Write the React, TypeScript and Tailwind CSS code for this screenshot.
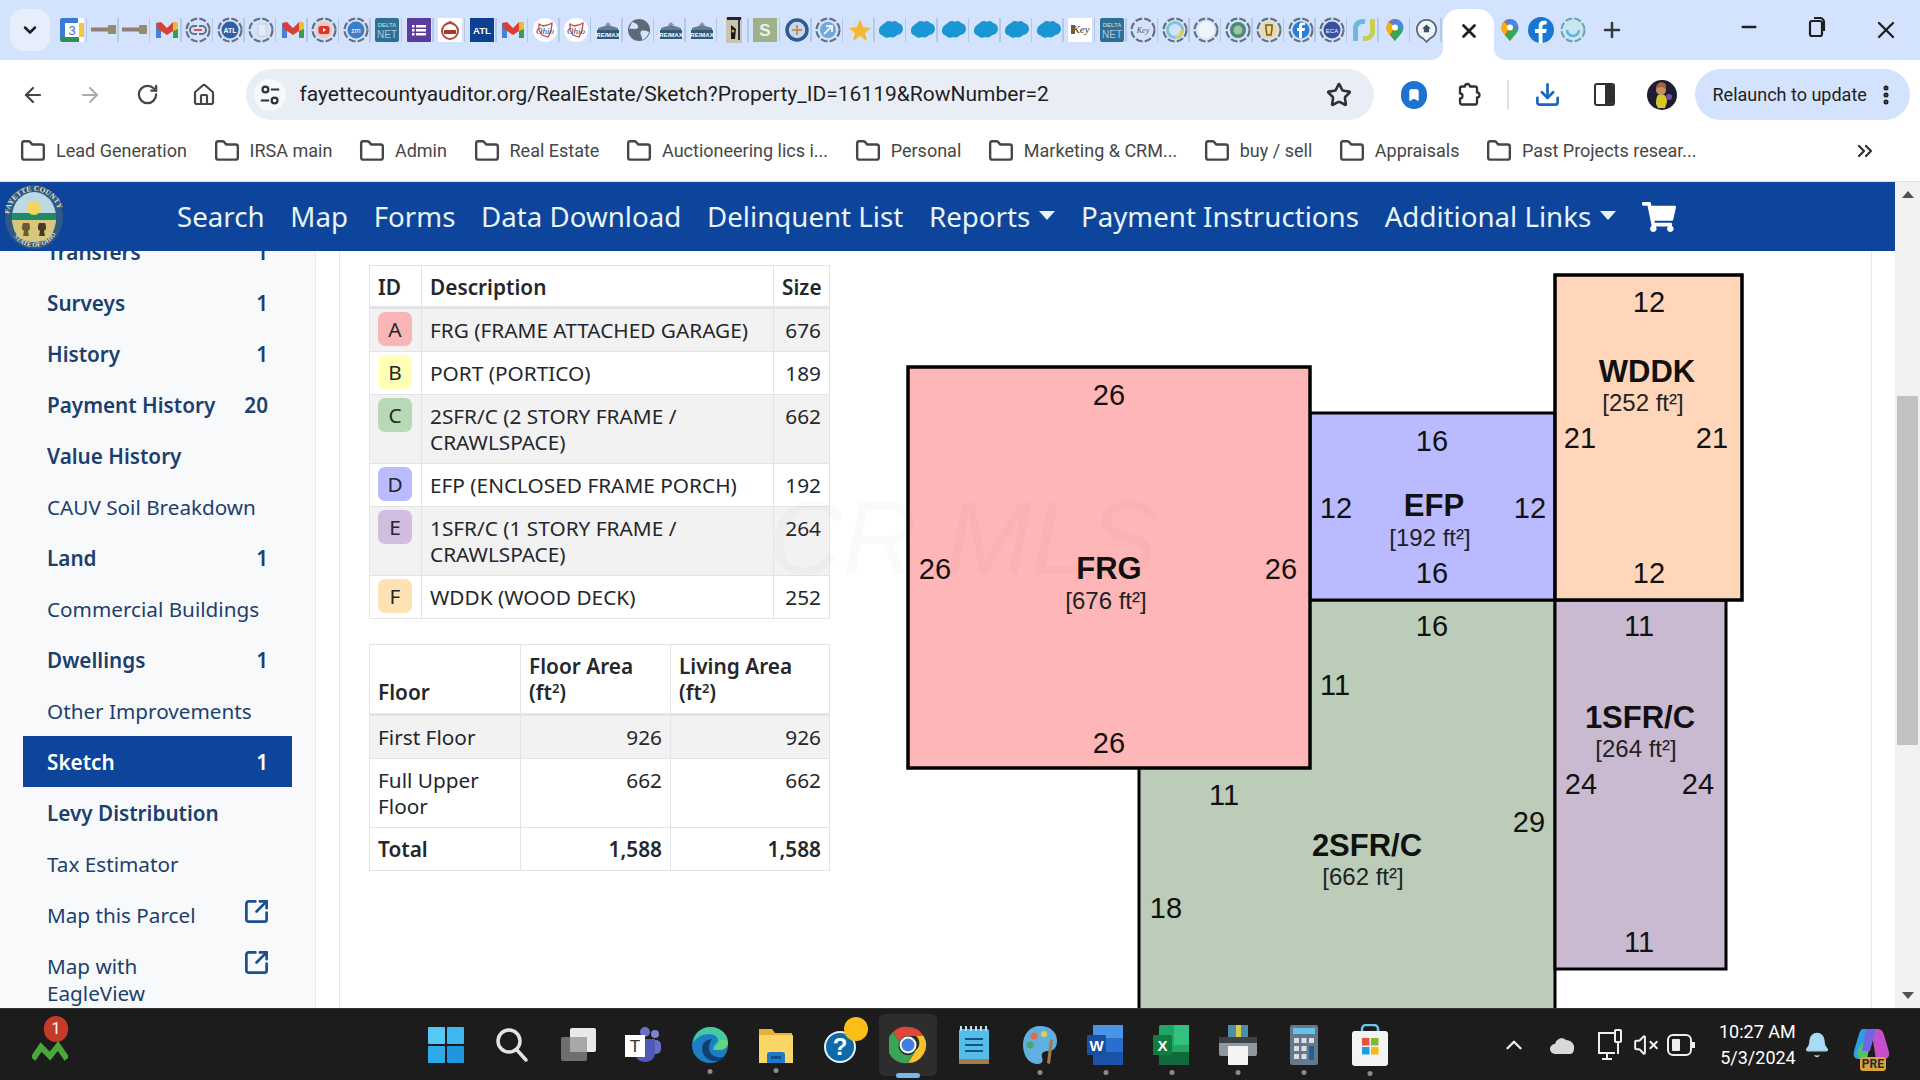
import { ReactNode } from "react";
import {
  ArrowLeft,
  ArrowRight,
  RotateCw,
  Home,
  Star,
  Download,
  EllipsisVertical,
  Plus,
  X,
  Minus,
  ChevronDown,
  ChevronUp,
  ChevronsRight,
  Folder,
  Bookmark,
  SquareArrowOutUpRight,
  Bell,
  VolumeX,
} from "lucide-react";
import { FaShoppingCart } from "react-icons/fa";

const ui = "font-['Noto_Sans',sans-serif]";
const chrome = "font-['Roboto',sans-serif]";

function Ring({ children }: { children?: ReactNode }) {
  return (
    <svg width="26" height="26" viewBox="0 0 26 26">
      <circle cx="13" cy="13" r="11.5" fill="none" stroke="#66717f" strokeWidth="2.2" strokeDasharray="7 2.2" />
      {children}
    </svg>
  );
}

function Gmail() {
  return (
    <svg width="24" height="24" viewBox="0 0 24 24">
      <path d="M1 5v15h5V10z" fill="#4a80d8" />
      <path d="M23 5v15h-5V10z" fill="#3c9a57" />
      <path d="M1 5l5-1 6 6 6-6 5 1-2 6-9 6-9-6z" fill="#d93f34" />
      <path d="M18 4l5 1v6l-5 2z" fill="#f2bc2e" />
    </svg>
  );
}

function Maps({ size = 24 }: { size?: number }) {
  return (
    <svg width={size} height={size} viewBox="0 0 24 24">
      <path d="M12 1a8.5 8.5 0 0 0-8.5 8.5c0 3 1.5 5 3.5 7.5l5 6z" fill="#e0483c" />
      <path d="M12 1a8.5 8.5 0 0 1 8.5 8.5c0 1.5-.4 2.7-1 4L6 4z" fill="#4a86e8" />
      <path d="M19.5 13.5c-1.5 3-5 6-7.5 9.500l-5-6 9-9z" fill="#34a853" />
      <path d="M3.5 9.5c0-1.500.8-4 2.500-5.500l6 5-5 8c-2-2.500-3.500-4.500-3.500-7.500z" fill="#f4b400" />
      <circle cx="12" cy="9.5" r="3" fill="#ffffff" />
    </svg>
  );
}

function House() {
  return (
    <svg width="26" height="24" viewBox="0 0 26 24">
      <path d="M13 4l3 3-3 1-3-1z" fill="#8d98a6" />
      <path d="M3 10l10-3 10 3v2H3z" fill="#6c7b8b" />
      <rect x="2" y="12" width="22" height="9" fill="#2f5a7e" />
      <text x="13" y="19" textAnchor="middle" fontSize="6" fill="#ffffff" fontFamily="Liberation Sans" fontWeight="700">RE/MAX</text>
    </svg>
  );
}

function Cloud() {
  return (
    <svg width="26" height="20" viewBox="0 0 26 20">
      <path d="M7 3c2-2.500 5-2.500 7-1 2-2 5-1 6 1 3 .5 5 3 5 6s-3 6-6 6c-2 2.500-5 3-7 2-3 1.500-6 .5-7-1.500C2 15 .5 12.500 1 10c.2-3 3-5.500 6-7z" fill="#1b96d4" />
    </svg>
  );
}

function Ohio() {
  return (
    <svg width="24" height="24" viewBox="0 0 24 24">
      <circle cx="12" cy="12" r="12" fill="#ffffff" />
      <path d="M6 6l4 2 5-1 4-2-1 8-3 6-6-2-3-5z" fill="none" stroke="#c8454a" strokeWidth="1.3" />
      <text x="12" y="16" textAnchor="middle" fontSize="9" fontStyle="italic" fill="#1f3f7a" fontFamily="Liberation Serif">Ohio</text>
    </svg>
  );
}

const tabKinds = [
  "cal", "pin", "pin", "gmail", "link", "ratl", "blank", "gmail", "yt", "zm", "delta", "list", "rot", "atl", "gmail",
  "ohio", "ohio", "house", "globe", "house", "house", "book", "s", "bluecirc", "ringz", "star",
  "cloud", "cloud", "cloud", "cloud", "cloud", "cloud", "key", "delta", "ringkey", "swirl", "blank2", "green", "yellow", "fb", "eca",
  "swoosh", "maps", "pinhome",
];

function Favicon({ kind }: { kind: string }) {
  switch (kind) {
    case "cal":
      return (
        <svg width="24" height="24" viewBox="0 0 24 24">
          <rect width="24" height="24" rx="2" fill="#fff" />
          <path d="M0 2a2 2 0 0 1 2-2h16v5H5v14H0z" fill="#3b78d8" />
          <path d="M19 5h5v14h-5z" fill="#f4c542" />
          <path d="M0 19h19v5H2a2 2 0 0 1-2-2z" fill="#2f8f56" />
          <text x="12" y="17" textAnchor="middle" fontSize="13" fill="#3d6fb4" fontFamily="Liberation Sans">3</text>
        </svg>
      );
    case "pin":
      return (
        <svg width="26" height="12" viewBox="0 0 26 12">
          <rect x="0" y="3.5" width="18" height="4" fill="#8f7f72" />
          <rect x="17" y="1" width="8" height="9" rx="1" fill="#9a8a6d" />
        </svg>
      );
    case "gmail":
      return <Gmail />;
    case "link":
      return (
        <Ring>
          <path d="M12 9H9a4 4 0 0 0 0 8h3M14 9h3a4 4 0 0 1 0 8h-3" fill="none" stroke="#66717f" strokeWidth="2" />
          <rect x="9" y="12" width="8" height="2" fill="#d9534f" />
        </Ring>
      );
    case "ratl":
      return (
        <Ring>
          <circle cx="13" cy="13" r="8.5" fill="#2f5fa7" />
          <text x="13" y="15.5" textAnchor="middle" fontSize="7" fontWeight="700" fill="#fff" fontFamily="Liberation Sans">ATL</text>
        </Ring>
      );
    case "blank":
      return (
        <Ring>
          <rect x="10" y="7" width="8" height="12" fill="#e5ebf5" stroke="#c6ccd6" />
        </Ring>
      );
    case "yt":
      return (
        <Ring>
          <circle cx="13" cy="13" r="8.5" fill="#f2c6c2" />
          <rect x="7.5" y="9" width="11" height="8" rx="2" fill="#e0352b" />
          <path d="M12 11l3 2-3 2z" fill="#fff" />
        </Ring>
      );
    case "zm":
      return (
        <Ring>
          <circle cx="13" cy="13" r="8.5" fill="#3c7ec9" />
          <text x="13" y="15.5" textAnchor="middle" fontSize="7" fill="#fff" fontFamily="Liberation Sans">zm</text>
        </Ring>
      );
    case "delta":
      return (
        <svg width="24" height="24" viewBox="0 0 24 24">
          <rect width="24" height="24" rx="2" fill="#2e6f96" />
          <text x="12" y="9" textAnchor="middle" fontSize="6" fill="#cfe1ec" fontFamily="Liberation Sans">DELTA</text>
          <text x="12" y="20" textAnchor="middle" fontSize="10" fill="#a9cbdf" fontFamily="Liberation Sans">NET</text>
        </svg>
      );
    case "list":
      return (
        <svg width="24" height="24" viewBox="0 0 24 24">
          <rect width="24" height="24" rx="1" fill="#5b3b9d" />
          <path d="M9 7h10v2.500H9zM9 11h10v2.500H9zM9 15h10v2.500H9zM5 7h2.500v2.500H5zM5 11h2.500v2.500H5zM5 15h2.500v2.500H5z" fill="#fff" />
        </svg>
      );
    case "rot":
      return (
        <svg width="24" height="24" viewBox="0 0 24 24">
          <rect width="24" height="24" fill="#fff" />
          <circle cx="12" cy="13" r="8" fill="none" stroke="#b34a3a" strokeWidth="2" />
          <rect x="6" y="12" width="12" height="4" fill="#a8392b" />
          <path d="M7 7l5-3 5 3" fill="none" stroke="#b34a3a" strokeWidth="2" />
        </svg>
      );
    case "atl":
      return (
        <svg width="24" height="24" viewBox="0 0 24 24">
          <rect width="24" height="24" fill="#0d3f93" />
          <text x="12" y="16" textAnchor="middle" fontSize="9.5" fontWeight="700" fill="#fff" fontFamily="Liberation Sans">ATL</text>
        </svg>
      );
    case "ohio":
      return <Ohio />;
    case "house":
      return <House />;
    case "globe":
      return (
        <svg width="24" height="24" viewBox="0 0 24 24">
          <circle cx="12" cy="12" r="11" fill="#5d6a7a" />
          <path d="M5 4c4 1 7 3 6 6-3 2-6 0-9 1zM14 13c3-1 6 0 8 1-1 4-4 7-7 8 1-3-3-6-1-9z" fill="#d3e3fd" />
        </svg>
      );
    case "book":
      return (
        <svg width="16" height="26" viewBox="0 0 16 26">
          <rect width="16" height="26" fill="#c9c4b2" />
          <rect x="1" y="0" width="14" height="3" fill="#23262c" />
          <path d="M5 8l5 4-1 10H5z" fill="#17181c" />
          <rect x="12" y="3" width="2" height="20" fill="#2f3640" />
          <circle cx="7" cy="14" r="1.5" fill="#e3a529" />
        </svg>
      );
    case "s":
      return (
        <svg width="24" height="24" viewBox="0 0 24 24">
          <rect width="24" height="24" fill="#9db28a" />
          <text x="12" y="18" textAnchor="middle" fontSize="17" fontWeight="700" fill="#f0f3e7" fontFamily="Liberation Sans">S</text>
        </svg>
      );
    case "bluecirc":
      return (
        <svg width="24" height="24" viewBox="0 0 24 24">
          <circle cx="12" cy="12" r="10" fill="#c9d7e6" stroke="#2d5c92" strokeWidth="3.5" />
          <path d="M12 7v10M7 12h10" stroke="#b7956b" strokeWidth="2" />
        </svg>
      );
    case "ringz":
      return (
        <Ring>
          <circle cx="13" cy="13" r="8" fill="#6ea8d8" />
          <path d="M9 17l8-8M11 9h6v6" fill="none" stroke="#e6f0fb" strokeWidth="2" />
        </Ring>
      );
    case "star":
      return (
        <svg width="24" height="24" viewBox="0 0 24 24">
          <path d="M12 1l3 8 8 1-6 5 2 8-7-5-7 5 2-8-6-5 8-1z" fill="#f5b82e" />
        </svg>
      );
    case "cloud":
      return <Cloud />;
    case "key":
      return (
        <svg width="24" height="24" viewBox="0 0 24 24">
          <rect width="24" height="24" fill="#fff" />
          <text x="13" y="15" textAnchor="middle" fontSize="11" fontStyle="italic" fill="#333" fontFamily="Liberation Serif">Key</text>
          <rect x="3" y="7" width="4" height="9" fill="#7a5a35" />
        </svg>
      );
    case "ringkey":
      return (
        <Ring>
          <text x="13" y="16" textAnchor="middle" fontSize="8" fontStyle="italic" fill="#555" fontFamily="Liberation Serif">Key</text>
        </Ring>
      );
    case "swirl":
      return (
        <Ring>
          <circle cx="13" cy="13" r="7.5" fill="none" stroke="#7fc4d8" strokeWidth="3" />
          <path d="M13 20a7 7 0 0 0 7-7" fill="none" stroke="#d7d44f" strokeWidth="3" />
        </Ring>
      );
    case "blank2":
      return (
        <Ring>
          <circle cx="13" cy="13" r="8.5" fill="#f1f5fb" />
        </Ring>
      );
    case "green":
      return (
        <Ring>
          <circle cx="13" cy="13" r="8" fill="#4a8a72" />
          <circle cx="13" cy="13" r="4.5" fill="#9cc4ad" />
        </Ring>
      );
    case "yellow":
      return (
        <Ring>
          <circle cx="13" cy="13" r="8.5" fill="#eedb8f" />
          <path d="M10 8h6v4l-1 6h-4l-1-6z" fill="none" stroke="#655a44" strokeWidth="1.5" />
        </Ring>
      );
    case "fb":
      return (
        <Ring>
          <circle cx="13" cy="13" r="8.5" fill="#2d7dd2" />
          <path d="M14 21v-7h2.500l.5-3h-3V9.500c0-1 .5-1.500 1.500-1.500H17V5.500h-2.500c-2.500 0-3.500 1.500-3.500 3.500v2H9v3h2v7z" fill="#fff" />
        </Ring>
      );
    case "eca":
      return (
        <Ring>
          <circle cx="13" cy="13" r="8.5" fill="#3a4f9e" />
          <text x="13" y="16" textAnchor="middle" fontSize="6" fill="#fff" fontFamily="Liberation Sans">ECA</text>
        </Ring>
      );
    case "swoosh":
      return (
        <svg width="26" height="26" viewBox="0 0 26 26">
          <path d="M2 24V12C2 6 6 2 12 2h2v5h-2c-3 0-5 2-5 5v12z" fill="#6fb7dc" />
          <path d="M24 2v12c0 6-4 10-10 10h-2v-5h2c3 0 5-2 5-5V2z" fill="#c8cf4f" />
        </svg>
      );
    case "maps":
      return <Maps />;
    case "pinhome":
      return (
        <svg width="21" height="25" viewBox="0 0 24 28">
          <path d="M12 27l-4-4a11 11 0 1 1 8 0z" fill="#f1f5fb" stroke="#5b6876" strokeWidth="2" />
          <path d="M12 7l5 5h-2v4H9v-4H7z" fill="#3f5165" />
        </svg>
      );
    default:
      return null;
  }
}

function Tab({ kind }: { kind: string }) {
  return (
    <div className="flex w-[31.5px] shrink-0 items-center justify-center">
      <div className="flex w-[27px] justify-center">
        <Favicon kind={kind} />
      </div>
      <div className="h-[24px] w-[1.5px] shrink-0 bg-[#b4c9e8]" />
    </div>
  );
}

function TabStrip() {
  return (
    <div className="flex h-[60px] items-center bg-[#d3e3fd] text-[#1f1f1f]">
      <div className="ml-[10px] mr-[7px] flex h-[42px] w-[40px] items-center justify-center rounded-[14px] bg-[#e6eefb]">
        <ChevronDown size={20} strokeWidth={3} />
      </div>
      {tabKinds.map((k, i) => (
        <Tab key={i} kind={k} />
      ))}
      <div className="relative mt-[9px] flex h-[51px] w-[51px] shrink-0 items-center justify-center rounded-t-[16px] bg-white">
        <X size={22} strokeWidth={3} className="mb-[8px]" />
        <svg className="absolute bottom-0 left-[-12px]" width="12" height="12" viewBox="0 0 12 12">
          <path d="M12 0v12H0a12 12 0 0 0 12-12z" fill="#ffffff" />
        </svg>
        <svg className="absolute bottom-0 right-[-12px]" width="12" height="12" viewBox="0 0 12 12">
          <path d="M0 0v12h12A12 12 0 0 1 0 0z" fill="#ffffff" />
        </svg>
      </div>
      <div className="flex w-[31.5px] shrink-0 items-center justify-center"><Maps /></div>
      <div className="flex w-[31.5px] shrink-0 items-center justify-center">
        <svg width="26" height="26" viewBox="0 0 26 26">
          <circle cx="13" cy="13" r="13" fill="#1877d2" />
          <path d="M14.5 26v-10h3.500l.6-4h-4.100V9.500c0-1.200.6-2 2-2h2.200V4c-1-.1-2-.3-3-.3-3.200 0-5 2-5 5V12H7v4h3.700v10z" fill="#fff" />
        </svg>
      </div>
      <div className="flex w-[31.5px] shrink-0 items-center justify-center">
        <svg width="26" height="26" viewBox="0 0 26 26">
          <circle cx="13" cy="13" r="11.5" fill="#cbe6f1" stroke="#66a0b8" strokeWidth="2" strokeDasharray="7 2.2" />
          <path d="M7 13a6 6 0 0 0 12 0" fill="none" stroke="#5db6dd" strokeWidth="2.5" />
        </svg>
      </div>
      <div className="flex w-[47px] shrink-0 items-center justify-center">
        <Plus size={24} strokeWidth={2.5} className="text-[#33383f]" />
      </div>
      <div className="ml-auto flex">
        <div className="flex w-[66px] justify-center"><Minus size={22} strokeWidth={2.5} /></div>
        <div className="flex w-[70px] justify-center">
          <svg width="20" height="22" viewBox="0 0 20 22" fill="none" stroke="#1f1f1f" strokeWidth="2.2">
            <rect x="3" y="5" width="12" height="15" rx="2" />
            <path d="M7 2h6a4 4 0 0 1 4 4v9" />
          </svg>
        </div>
        <div className="flex w-[68px] justify-center"><X size={28} strokeWidth={2} /></div>
      </div>
    </div>
  );
}

function Toolbar() {
  return (
    <div className={`${chrome} flex h-[60px] items-center rounded-t-[12px] bg-white pt-[9px] text-[#454746]`}>
      <div className="ml-[4.5px] flex w-[57px] justify-center"><ArrowLeft size={24} strokeWidth={2.2} /></div>
      <div className="flex w-[57px] justify-center"><ArrowRight size={24} strokeWidth={2} className="text-[#a9abad]" /></div>
      <div className="flex w-[57px] justify-center"><RotateCw size={23} strokeWidth={2.4} /></div>
      <div className="flex w-[57px] justify-center"><Home size={24} strokeWidth={2.2} /></div>
      <div className="ml-[13px] flex h-[51px] w-[1128px] items-center rounded-full bg-[#e9eef6]">
        <div className="ml-[8px] flex h-[32px] w-[32px] items-center justify-center rounded-full bg-[#f6f8fc]">
          <svg width="22" height="22" viewBox="0 0 24 24" fill="none" stroke="#303133" strokeWidth="2.4">
            <circle cx="7" cy="6" r="3.2" />
            <path d="M13 6h9M2 18h9" />
            <circle cx="17" cy="18" r="3.2" />
          </svg>
        </div>
        <span className="ml-[14px] text-[21px] text-[#1f1f1f]">fayettecountyauditor.org/RealEstate/Sketch?Property_ID=16119&amp;RowNumber=2</span>
        <Star size={26} strokeWidth={2.4} className="ml-auto mr-[22px] text-[#303133]" />
      </div>
      <div className="ml-[13px] flex w-[55px] justify-center">
        <div className="flex h-[28px] w-[26px] items-center justify-center rounded-full bg-[#1e73cf]">
          <Bookmark size={14} fill="#ffffff" strokeWidth={2} className="text-white" />
        </div>
      </div>
      <div className="flex w-[55px] justify-center">
        <svg width="24" height="27" viewBox="0 0 24 24" fill="none" stroke="#303133" strokeWidth="2.3" strokeLinejoin="round">
          <path d="M8 22H5a2 2 0 0 1-2-2v-4a2.500 2.500 0 0 0 0-5V6a2 2 0 0 1 2-2h3a2.500 2.500 0 0 1 5 0h5a2 2 0 0 1 2 2v4a2.500 2.500 0 0 1 0 5v5a2 2 0 0 1-2 2z" />
        </svg>
      </div>
      <div className="ml-[10px] h-[30px] w-[2px] bg-[#dfe3e8]" />
      <div className="ml-[11px] flex w-[56px] justify-center"><Download size={27} strokeWidth={2.4} className="text-[#1769bf]" /></div>
      <div className="flex w-[58px] justify-center">
        <div className="flex h-[23px] w-[21px] overflow-hidden rounded-[3px] border-[2.5px] border-[#2e3033]">
          <div className="w-1/2" />
          <div className="w-1/2 bg-[#2e3033]" />
        </div>
      </div>
      <div className="flex w-[56px] justify-center">
        <svg width="30" height="30" viewBox="0 0 30 30">
          <circle cx="15" cy="15" r="15" fill="#1c1d33" />
          <path d="M9 24c0-6 1-10 5-10s6 3 6 8l-2 6h-7z" fill="#d8c626" />
          <circle cx="14" cy="10" r="5" fill="#c98e5c" />
          <path d="M9 9c0-5 4-8 8-6 3 1 2 5 1 6-3-3-6-2-9 0z" fill="#a8623a" />
          <circle cx="22" cy="17" r="3" fill="#7a4fa3" />
        </svg>
      </div>
      <div className="ml-[5px] flex h-[51px] w-[215px] items-center rounded-full bg-[#d3e3fd] pl-[18px] text-[#1f1f1f]">
        <span className="text-[18px]">Relaunch to update</span>
        <EllipsisVertical size={24} strokeWidth={3} className="ml-auto mr-[12px]" />
      </div>
    </div>
  );
}

const bookmarks = [
  "Lead Generation",
  "IRSA main",
  "Admin",
  "Real Estate",
  "Auctioneering lics i...",
  "Personal",
  "Marketing & CRM...",
  "buy / sell",
  "Appraisals",
  "Past Projects resear...",
];

function Bookmarks() {
  return (
    <div className={`${chrome} flex h-[62px] items-center gap-[26.6px] border-b border-[#d3e3fd] bg-white pl-[20px] text-[#454746]`}>
      {bookmarks.map((b) => (
        <div key={b} className="flex items-center gap-[10px]">
          <Folder size={26} strokeWidth={2.2} className="text-[#454746]" />
          <span className="text-[18px]">{b}</span>
        </div>
      ))}
      <ChevronsRight size={24} strokeWidth={2.2} className="ml-auto mr-[43px] text-[#303133]" />
    </div>
  );
}

function Seal() {
  return (
    <svg width="58" height="66" viewBox="0 0 58 66" className="shrink-0">
      <defs>
        <path id="sealTop" d="M4 33a25 26 0 0 1 50 0" />
        <path id="sealBottom" d="M3 35a26 28 0 0 0 52 0" />
      </defs>
      <ellipse cx="29" cy="33" rx="29" ry="32" fill="#2f5a88" />
      <ellipse cx="29" cy="33" rx="22" ry="25" fill="#bcd9e4" />
      <path d="M7 29h44v7H7z" fill="#1f8a6a" />
      <circle cx="29" cy="24" r="7" fill="#f3d45e" />
      <path d="M7 36h44c-1 10-4 15-8 18-3 2-9 4-14 4s-11-2-14-4c-4-3-7-8-8-18z" fill="#d6c77c" />
      <path d="M18 39c-2 5-1 7 1 8l-1 5h6l-1-5c2-1 3-3 1-8z" fill="#6e5a32" />
      <path d="M34 39c-2 5-1 7 1 8l-1 5h6l-1-5c2-1 3-3 1-8z" fill="#453a22" />
      <text fontSize="7.5" fill="#e9e1b6" fontFamily="Liberation Serif" fontWeight="700">
        <textPath href="#sealTop" startOffset="4%">FAYETTE COUNTY</textPath>
      </text>
      <text fontSize="6.5" fill="#e9e1b6" fontFamily="Liberation Serif" fontWeight="700">
        <textPath href="#sealBottom" startOffset="22%">STATE OF OHIO</textPath>
      </text>
    </svg>
  );
}

function NavCaret({ label }: { label: string }) {
  return (
    <span className="flex items-center gap-[9px]">
      {label}
      <span className="mt-[-2px] h-0 w-0 border-x-[8.5px] border-t-[9px] border-x-transparent border-t-[#e8f4f8]" />
    </span>
  );
}

function TopNav() {
  return (
    <nav className={`${ui} flex h-[69px] shrink-0 items-center bg-[#0d459c] pl-[5px] text-[27.7px] text-[#e8f4f8]`}>
      <Seal />
      <div className="ml-[114px] flex items-center gap-[25.7px] pt-[1px]">
        <span>Search</span>
        <span>Map</span>
        <span>Forms</span>
        <span>Data Download</span>
        <span>Delinquent List</span>
        <NavCaret label="Reports" />
        <span>Payment Instructions</span>
        <NavCaret label="Additional Links" />
        <FaShoppingCart size={34} className="text-white" />
      </div>
    </nav>
  );
}

const sideItems: { label: string; count?: string; bold?: boolean; active?: boolean; ext?: boolean }[] = [
  { label: "Transfers", count: "1", bold: true },
  { label: "Surveys", count: "1", bold: true },
  { label: "History", count: "1", bold: true },
  { label: "Payment History", count: "20", bold: true },
  { label: "Value History", bold: true },
  { label: "CAUV Soil Breakdown" },
  { label: "Land", count: "1", bold: true },
  { label: "Commercial Buildings" },
  { label: "Dwellings", count: "1", bold: true },
  { label: "Other Improvements" },
  { label: "Sketch", count: "1", bold: true, active: true },
  { label: "Levy Distribution", bold: true },
  { label: "Tax Estimator" },
  { label: "Map this Parcel", ext: true },
  { label: "Map with EagleView", ext: true },
];

function Sidebar() {
  return (
    <aside className={`${ui} w-[316px] shrink-0 overflow-hidden border-r border-[#e6e8eb] bg-[#f8f9fa] pl-[23px] pr-[23px]`}>
      <div className="mt-[-25px]">
        {sideItems.map((it) => (
          <div
            key={it.label}
            className={`flex justify-between pb-[11px] pl-[24px] pr-[24px] pt-[13px] text-[20.7px] leading-[27px] ${
              it.active ? "bg-[#0d459c] text-white" : "text-[#1c3f6e]"
            } ${it.bold ? "font-semibold" : "font-normal"}`}
          >
            <span className={it.ext ? "w-[160px]" : ""}>{it.label}</span>
            {it.count && <span>{it.count}</span>}
            {it.ext && <SquareArrowOutUpRight size={27} strokeWidth={2.4} className="mt-[-4px] mr-[-2px] text-[#1c4f8e]" />}
          </div>
        ))}
      </div>
    </aside>
  );
}

const legend = [
  { id: "A", chip: "bg-[#f9b6b6]", desc: "FRG (FRAME ATTACHED GARAGE)", size: "676" },
  { id: "B", chip: "bg-[#ffffb8]", desc: "PORT (PORTICO)", size: "189" },
  { id: "C", chip: "bg-[#b9d9b6]", desc: "2SFR/C (2 STORY FRAME / CRAWLSPACE)", size: "662" },
  { id: "D", chip: "bg-[#babcff]", desc: "EFP (ENCLOSED FRAME PORCH)", size: "192" },
  { id: "E", chip: "bg-[#d2bce0]", desc: "1SFR/C (1 STORY FRAME / CRAWLSPACE)", size: "264" },
  { id: "F", chip: "bg-[#ffe2b4]", desc: "WDDK (WOOD DECK)", size: "252" },
];

const cellBase = "border border-[#e2e4e7] px-[8px] py-[8px]";
const cell = `${cellBase} align-top`;

function LegendTable() {
  return (
    <table className="w-[460px] table-fixed border-collapse font-['Noto_Sans',sans-serif] text-[20.8px] leading-[26px] text-[#24272b]">
      <colgroup>
        <col className="w-[52px]" />
        <col className="w-[352px]" />
        <col className="w-[56px]" />
      </colgroup>
      <thead>
        <tr>
          <th className={`${cell} border-b-[3px] pb-[5.5px] text-left font-semibold`}>ID</th>
          <th className={`${cell} border-b-[3px] pb-[5.5px] text-left font-semibold`}>Description</th>
          <th className={`${cell} border-b-[3px] pb-[5.5px] text-right font-semibold`}>Size</th>
        </tr>
      </thead>
      <tbody>
        {legend.map((r, i) => (
          <tr key={r.id} className={i % 2 === 0 ? "bg-[#f2f2f2]" : "bg-white"}>
            <td className="border border-[#e2e4e7] px-[8px] py-[3.5px] align-top">
              <div className={`flex h-[34px] w-[34px] items-center justify-center rounded-[7px] ${r.chip}`}>{r.id}</div>
            </td>
            <td className={cell}>{r.desc}</td>
            <td className={`${cell} text-right`}>{r.size}</td>
          </tr>
        ))}
      </tbody>
    </table>
  );
}

function FloorTable() {
  const sq = (
    <>
      (ft<sup className="text-[13px] leading-none">2</sup>)
    </>
  );
  return (
    <table className="mt-[25px] w-[460px] table-fixed border-collapse font-['Noto_Sans',sans-serif] text-[20.8px] leading-[26px] text-[#24272b]">
      <colgroup>
        <col className="w-[151px]" />
        <col className="w-[150px]" />
        <col className="w-[159px]" />
      </colgroup>
      <thead>
        <tr>
          <th className={`${cellBase} border-b-[3px] text-left align-bottom font-semibold`}>Floor</th>
          <th className={`${cell} border-b-[3px] text-left font-semibold`}>Floor Area {sq}</th>
          <th className={`${cell} border-b-[3px] text-left font-semibold`}>Living Area {sq}</th>
        </tr>
      </thead>
      <tbody>
        <tr className="bg-[#f2f2f2]">
          <td className={cell}>First Floor</td>
          <td className={`${cell} text-right`}>926</td>
          <td className={`${cell} text-right`}>926</td>
        </tr>
        <tr>
          <td className={cell}>Full Upper Floor</td>
          <td className={`${cell} text-right`}>662</td>
          <td className={`${cell} text-right`}>662</td>
        </tr>
        <tr className="font-semibold">
          <td className={cell}>Total</td>
          <td className={`${cell} text-right`}>1,588</td>
          <td className={`${cell} text-right`}>1,588</td>
        </tr>
      </tbody>
    </table>
  );
}

const dims: [number, number, string][] = [
  [1109, 405, "26"], [935, 579, "26"], [1281, 579, "26"], [1109, 753, "26"],
  [1432, 451, "16"], [1336, 518, "12"], [1530, 518, "12"], [1432, 583, "16"],
  [1649, 312, "12"], [1580, 448, "21"], [1712, 448, "21"], [1649, 583, "12"],
  [1432, 636, "16"], [1335, 695, "11"], [1224, 805, "11"], [1529, 832, "29"], [1166, 918, "18"], [1347, 1030, "27"],
  [1639, 636, "11"], [1581, 794, "24"], [1698, 794, "24"], [1639, 952, "11"],
];

const areas: [number, number, string, number, number, string][] = [
  [1109, 579, "FRG", 1106, 609, "[676 ft²]"],
  [1434, 516, "EFP", 1430, 546, "[192 ft²]"],
  [1647, 382, "WDDK", 1643, 411, "[252 ft²]"],
  [1367, 856, "2SFR/C", 1363, 885, "[662 ft²]"],
  [1640, 728, "1SFR/C", 1636, 757, "[264 ft²]"],
];

function Sketch() {
  return (
    <svg width="860" height="743" viewBox="900 265 860 743" className="ml-[71px] shrink-0 font-['Liberation_Sans',sans-serif]">
      <g stroke="#000000" strokeWidth="3">
        <rect x="1139" y="600" width="416" height="500" fill="#bbccb9" />
        <rect x="1555" y="600" width="171" height="369" fill="#cabad1" />
        <rect x="1310" y="413" width="245" height="187" fill="#b9baff" />
        <rect x="1555" y="275" width="187" height="325" fill="#ffd6ba" strokeWidth="3.5" />
        <rect x="908" y="367" width="402" height="401" fill="#ffb6b9" strokeWidth="3.5" />
      </g>
      <g textAnchor="middle" fill="#111111">
        {dims.map(([x, y, t], i) => (
          <text key={i} x={x} y={y} fontSize="29">{t}</text>
        ))}
        {areas.map(([x, y, t, x2, y2, t2]) => (
          <g key={t}>
            <text x={x} y={y} fontSize="31" fontWeight="700">{t}</text>
            <text x={x2} y={y2} fontSize="24" fill="#222222">{t2}</text>
          </g>
        ))}
      </g>
    </svg>
  );
}

function Main() {
  return (
    <div className="flex min-h-0 flex-1">
      <Sidebar />
      <div className="w-[23px] shrink-0 bg-white" />
      <main className="relative flex w-[1533px] shrink-0 overflow-hidden border-x border-[#e6e8eb] bg-white pl-[29px] pt-[14px]">
        <div className="w-[460px] shrink-0">
          <LegendTable />
          <FloorTable />
        </div>
        <Sketch />
        {/* faint watermark over the page */}
        <span className="pointer-events-none absolute left-[428px] top-[236px] font-['Liberation_Sans',sans-serif] text-[103px] italic leading-none text-black/[0.02]">
          CR MLS
        </span>
      </main>
      <div className="w-[23px] shrink-0 bg-white" />
    </div>
  );
}

function Scrollbar() {
  return (
    <div className="flex w-[25px] shrink-0 flex-col items-center bg-[#f1f1f1] pt-[9px]">
      <div className="h-0 w-0 border-x-[6px] border-b-[7px] border-x-transparent border-b-[#505050]" />
      <div className="mt-[198px] h-[349px] w-[21px] bg-[#c1c1c1]" />
      <div className="mt-[247px] h-0 w-0 border-x-[6px] border-t-[7px] border-x-transparent border-t-[#505050]" />
    </div>
  );
}

function Dot() {
  return <span className="absolute bottom-[-10px] left-1/2 h-[5px] w-[5px] -translate-x-1/2 rounded-full bg-[#8a8a8a]" />;
}

const taskIcons: { icon: ReactNode; dot?: boolean; active?: boolean }[] = [
  {
    icon: (
      <svg width="36" height="36" viewBox="0 0 36 36">
        <rect x="0" y="0" width="17" height="17" rx="1" fill="#55c8f7" />
        <rect x="19" y="0" width="17" height="17" rx="1" fill="#3fb8f0" />
        <rect x="0" y="19" width="17" height="17" rx="1" fill="#2ea9ea" />
        <rect x="19" y="19" width="17" height="17" rx="1" fill="#1f96de" />
      </svg>
    ),
  },
  {
    icon: (
      <svg width="36" height="36" viewBox="0 0 36 36" fill="none" stroke="#e3e3e3">
        <circle cx="15" cy="14" r="11" strokeWidth="3.5" />
        <path d="M23 23l9 10" strokeWidth="3.5" strokeLinecap="round" />
      </svg>
    ),
  },
  {
    icon: (
      <svg width="38" height="36" viewBox="0 0 38 36">
        <rect x="2" y="10" width="26" height="24" rx="2" fill="#6f6f6f" />
        <rect x="11" y="1" width="26" height="24" rx="2" fill="#e9e9e9" />
        <rect x="11" y="10" width="17" height="15" fill="#a8a8a8" />
      </svg>
    ),
  },
  {
    icon: (
      <svg width="38" height="36" viewBox="0 0 38 36">
        <circle cx="30" cy="7" r="4" fill="#7b83d6" />
        <circle cx="20" cy="5" r="5" fill="#6a70c8" />
        <rect x="25" y="13" width="11" height="14" rx="5" fill="#6870c6" />
        <path d="M10 12h20v14c0 5-4 9-10 9s-10-4-10-9z" fill="#5059b8" />
        <rect x="0" y="8" width="20" height="22" fill="#ffffff" />
        <text x="10" y="25" textAnchor="middle" fontSize="17" fill="#333333" fontFamily="Liberation Sans">T</text>
      </svg>
    ),
  },
  {
    dot: true,
    icon: (
      <svg width="38" height="38" viewBox="0 0 38 38">
        <circle cx="19" cy="19" r="18" fill="#1c7fc4" />
        <path d="M2 17C3 7 11 1 20 1c9 0 17 7 17 15 0 5-4 8-9 8h-6c0-6 5-6 5-10 0-3-4-6-9-6-8 0-14 5-16 9z" fill="#45c9a0" />
        <path d="M11 22c0 8 6 13 13 13 4 0 8-2 11-5-3 1-6 2-9 1-5-1-8-5-8-9 0-5 3-9 3-9-5 0-10 4-10 9z" fill="#0f3f73" />
        <path d="M37 17c0 4-4 7-9 7h-4c1-5 5-5 5-10 4-1 8 0 8 3z" fill="#63d77c" />
      </svg>
    ),
  },
  {
    dot: true,
    icon: (
      <svg width="38" height="36" viewBox="0 0 38 36">
        <path d="M2 2h13l3 4h17v6H2z" fill="#e7b03a" />
        <rect x="2" y="8" width="34" height="28" fill="#fad667" />
        <path d="M10 28a3 3 0 0 1 3-3h12a3 3 0 0 1 3 3v8H10z" fill="#1f78c8" />
        <rect x="14" y="29" width="10" height="3" fill="#0f4f8f" />
      </svg>
    ),
  },
  {
    icon: (
      <div className="relative">
        <svg width="38" height="38" viewBox="0 0 38 38">
          <circle cx="17" cy="21" r="15" fill="#0f6ba8" stroke="#e6f2f8" strokeWidth="2" />
          <text x="17" y="29" textAnchor="middle" fontSize="24" fontWeight="700" fill="#ffffff" fontFamily="Liberation Sans">?</text>
        </svg>
        <span className="absolute right-[-7px] top-[-9px] h-[24px] w-[24px] rounded-full bg-[#fbbd19]" />
      </div>
    ),
  },
  {
    active: true,
    icon: (
      <svg width="38" height="38" viewBox="0 0 38 38">
        <path d="M19 1a18 18 0 0 1 15.6 9H19a9 9 0 0 0-8.5 6L4 6a18 18 0 0 1 15-5z" fill="#e0463b" />
        <path d="M34.6 10A18 18 0 0 1 19 37l8-13a9 9 0 0 0 0-14z" fill="#fbc02d" />
        <path d="M4 6a18 18 0 0 0 15 31l8-13a9 9 0 0 1-16.5-8z" fill="#3ba457" />
        <circle cx="19" cy="19" r="8.5" fill="#ffffff" />
        <circle cx="19" cy="19" r="6.5" fill="#3f7fe0" />
      </svg>
    ),
  },
  {
    icon: (
      <svg width="30" height="38" viewBox="0 0 30 38">
        <rect x="0" y="3" width="30" height="35" rx="2" fill="#56bdea" />
        <rect x="0" y="33" width="30" height="5" fill="#a37a4b" />
        <path d="M2 0v5M7 0v5M12 0v5M17 0v5M22 0v5M27 0v5" stroke="#b8e4f7" strokeWidth="2" />
        <path d="M6 13h18M6 19h18M6 25h18" stroke="#10557f" strokeWidth="2" />
      </svg>
    ),
  },
  {
    dot: true,
    icon: (
      <svg width="36" height="40" viewBox="0 0 36 40">
        <path d="M18 1C8 1 1 9 1 20s6 19 15 19c5 0 5-4 4-7-1-4 2-6 6-6 6 0 9-4 9-10C35 7 28 1 18 1z" fill="#5fb0de" />
        <circle cx="12" cy="11" r="3.5" fill="#e26a4c" />
        <circle cx="8" cy="20" r="3.5" fill="#4da763" />
        <circle cx="22" cy="9" r="3" fill="#f3c64a" />
        <path d="M28 14l3 1-3 24-3-1z" fill="#a37a4b" />
      </svg>
    ),
  },
  {
    dot: true,
    icon: (
      <svg width="38" height="40" viewBox="0 0 38 40">
        <rect x="6" y="0" width="30" height="40" rx="2" fill="#2a6fd0" />
        <rect x="6" y="0" width="30" height="13" fill="#4a94e8" />
        <rect x="6" y="27" width="30" height="13" fill="#1a53a8" />
        <rect x="0" y="10" width="19" height="20" rx="1" fill="#184f9e" />
        <text x="9.5" y="26" textAnchor="middle" fontSize="15" fontWeight="700" fill="#ffffff" fontFamily="Liberation Sans">W</text>
      </svg>
    ),
  },
  {
    dot: true,
    icon: (
      <svg width="38" height="40" viewBox="0 0 38 40">
        <rect x="6" y="0" width="30" height="40" rx="2" fill="#23a566" />
        <rect x="21" y="0" width="15" height="20" fill="#34c07f" />
        <rect x="6" y="27" width="30" height="13" fill="#0f6a3c" />
        <rect x="0" y="10" width="19" height="20" rx="1" fill="#107c41" />
        <text x="9.5" y="26" textAnchor="middle" fontSize="15" fontWeight="700" fill="#ffffff" fontFamily="Liberation Sans">X</text>
      </svg>
    ),
  },
  {
    dot: true,
    icon: (
      <svg width="38" height="40" viewBox="0 0 38 40">
        <rect x="9" y="0" width="20" height="14" fill="#4a90a8" />
        <rect x="17" y="0" width="5" height="14" fill="#d9c94f" />
        <rect x="0" y="12" width="38" height="19" rx="2" fill="#8f989f" />
        <rect x="0" y="12" width="38" height="6" fill="#3c4248" />
        <rect x="9" y="21" width="20" height="19" rx="1" fill="#f4f4f4" />
      </svg>
    ),
  },
  {
    dot: true,
    icon: (
      <svg width="28" height="40" viewBox="0 0 28 40">
        <rect width="28" height="40" rx="2" fill="#66788c" />
        <rect x="3" y="3" width="22" height="6" fill="#67c2e8" />
        <rect x="4" y="13" width="5" height="5" fill="#d9dfe5" />
        <rect x="11.5" y="13" width="5" height="5" fill="#d9dfe5" />
        <rect x="19" y="13" width="5" height="5" fill="#d9dfe5" />
        <rect x="4" y="21" width="5" height="5" fill="#d9dfe5" />
        <rect x="11.5" y="21" width="5" height="5" fill="#d9dfe5" />
        <rect x="19" y="21" width="5" height="14" fill="#275f94" />
        <rect x="4" y="29" width="5" height="5" fill="#d9dfe5" />
        <rect x="11.5" y="29" width="5" height="5" fill="#d9dfe5" />
      </svg>
    ),
  },
  {
    dot: true,
    icon: (
      <svg width="36" height="42" viewBox="0 0 36 42">
        <path d="M10 8V5a4 4 0 0 1 4-4h8a4 4 0 0 1 4 4v3" fill="none" stroke="#6fc3e8" strokeWidth="2.5" />
        <rect y="7" width="36" height="35" rx="3" fill="#f3f3f3" />
        <rect x="10" y="14" width="7.5" height="7.5" fill="#e5533d" />
        <rect x="19" y="14" width="7.5" height="7.5" fill="#7fba2a" />
        <rect x="10" y="23" width="7.5" height="7.5" fill="#1a9fe0" />
        <rect x="19" y="23" width="7.5" height="7.5" fill="#fbb80f" />
      </svg>
    ),
  },
];

function Taskbar() {
  return (
    <div className={`${chrome} flex h-[72px] shrink-0 items-center border-t border-[#333333] bg-[#1c1c1c] text-white`}>
      <div className="relative w-[413px] shrink-0 pl-[32px]">
        <svg width="36" height="22" viewBox="0 0 36 22" className="mt-[10px]">
          <path d="M1 20L9 8l9 9L26 7l9 13" fill="none" stroke="#4aa83a" strokeWidth="6" />
        </svg>
        <span className="absolute left-[44px] top-[-13px] flex h-[26px] w-[24px] items-center justify-center rounded-full bg-[#c63a2a] text-[16px]">1</span>
      </div>
      {taskIcons.map((t, i) => (
        <div key={i} className="relative flex h-[62px] w-[66px] shrink-0 items-center justify-center">
          {t.active && <span className="absolute inset-y-0 inset-x-[4px] rounded-[6px] bg-[#2d2d2d]" />}
          <div className="relative">
            {t.icon}
            {t.dot && <Dot />}
          </div>
          {t.active && <span className="absolute bottom-[-2px] left-1/2 h-[5px] w-[24px] -translate-x-1/2 rounded-full bg-[#76b9ed]" />}
        </div>
      ))}
      <ChevronUp size={26} strokeWidth={2.2} className="ml-[98px] text-[#f0f0f0]" />
      <svg width="26" height="20" viewBox="0 0 26 20" className="ml-[23px]">
        <path d="M5 19a5 5 0 0 1 0-10c1-5 7-8 11-4 5 0 9 4 8 9 0 3-2 5-4 5z" fill="#d9d9d9" />
      </svg>
      <svg width="26" height="32" viewBox="0 0 26 32" fill="none" stroke="#f0f0f0" strokeWidth="2" className="ml-[21px]">
        <path d="M18 4H2v20h16M10 24v6M5 30h10" />
        <rect x="18" y="1" width="6" height="12" rx="1" />
        <path d="M21 13v12" />
      </svg>
      <VolumeX size={26} strokeWidth={1.8} className="ml-[10px] text-[#f0f0f0]" />
      <svg width="28" height="22" viewBox="0 0 28 22" className="ml-[8px]">
        <rect x="1" y="1" width="23" height="20" rx="5" fill="none" stroke="#f0f0f0" strokeWidth="2" />
        <rect x="5" y="5" width="8" height="12" rx="1" fill="#f0f0f0" />
        <rect x="25" y="8" width="3" height="6" fill="#f0f0f0" />
      </svg>
      <div className="ml-[24px] flex flex-col items-end text-[18px] leading-[26px]">
        <span>10:27 AM</span>
        <span>5/3/2024</span>
      </div>
      <Bell size={28} fill="#a8dcf5" strokeWidth={1} className="ml-[7px] text-[#a8dcf5]" />
      <div className="relative ml-[22px]">
        <svg width="36" height="36" viewBox="0 0 36 36">
          <path d="M10 2h8l-6 30H5c-4 0-5-4-4-8l5-17c1-3 2-5 4-5z" fill="#2f9ee0" />
          <path d="M4 26c2-8 8-14 14-14l-4 20H6z" fill="#4fc46a" />
          <path d="M18 2h7c3 0 5 2 6 6l5 17c1 4-1 7-5 7h-8z" fill="#c74fc8" />
          <path d="M13 2h10l-6 22h-8z" fill="#7067e0" />
        </svg>
        <span className="absolute bottom-[-8px] left-[7px] rounded-[3px] bg-[#d9a43a] px-[2px] text-[12px] font-bold leading-[14px] text-[#2a2a2a]">PRE</span>
      </div>
    </div>
  );
}

export default function App() {
  return (
    <div className="flex h-[1080px] w-[1920px] flex-col overflow-hidden bg-white">
      <TabStrip />
      <Toolbar />
      <Bookmarks />
      <div className="flex h-[826px] shrink-0">
        <div className="flex w-[1895px] flex-col">
          <TopNav />
          <Main />
        </div>
        <Scrollbar />
      </div>
      <Taskbar />
    </div>
  );
}
